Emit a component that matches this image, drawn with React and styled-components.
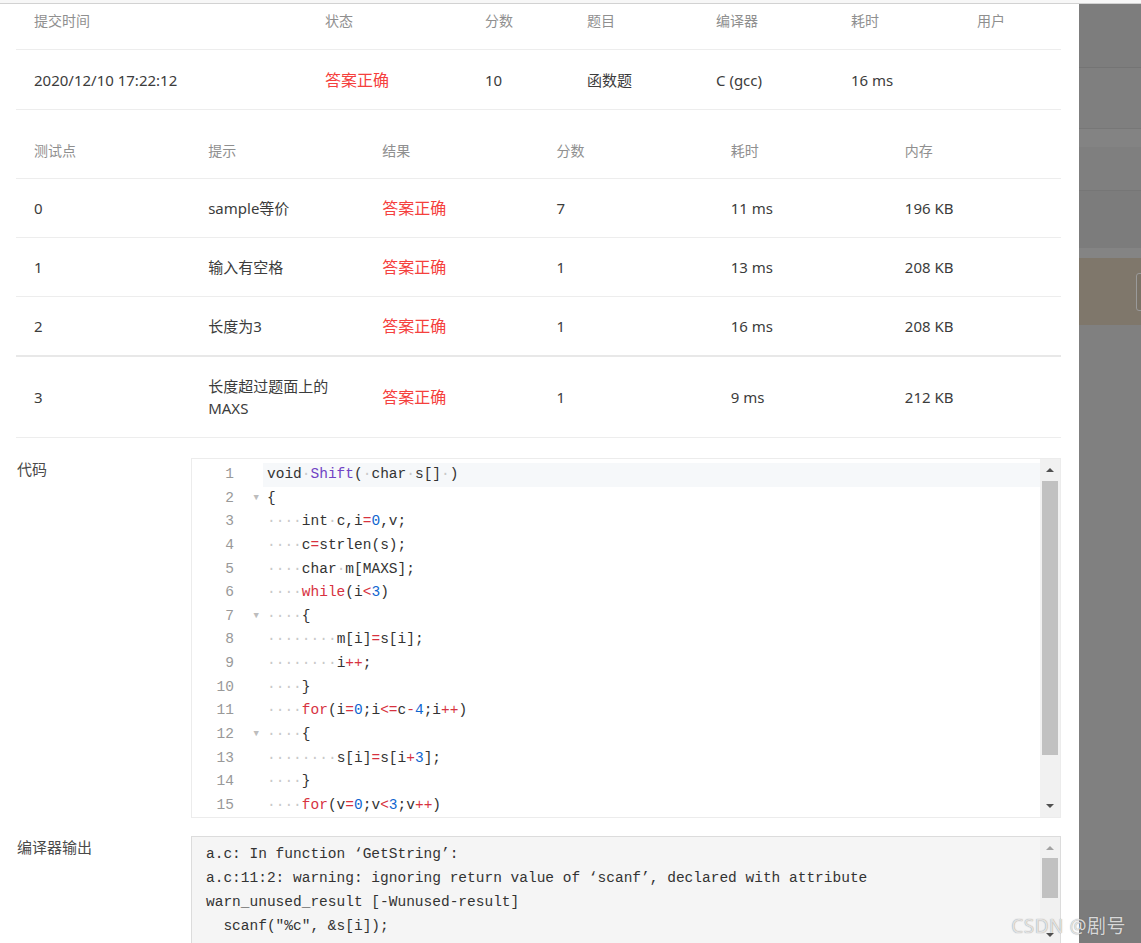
import React from 'react';
import styled, { createGlobalStyle } from 'styled-components';

const GlobalStyle = createGlobalStyle`
  html, body {
    margin: 0;
    padding: 0;
  }
  body {
    width: 1141px;
    height: 943px;
    overflow: hidden;
    background: #fff;
    font-family: "Noto Sans", "Noto Sans CJK SC", sans-serif;
    color: #333;
  }
`;

const mono = `"Liberation Mono", "DejaVu Sans Mono", monospace`;

const Screen = styled.div`
  position: relative;
  width: 1141px;
  height: 943px;
  overflow: hidden;
  display: flex;
  flex-direction: column;
`;

const TopEdge = styled.div`
  height: 3px;
  background: #f7f7f7;
  border-bottom: 1px solid #d2d2d2;
  flex: none;
`;

const Stage = styled.div`
  flex: 1;
  display: flex;
  min-height: 0;
`;

const Drawer = styled.div`
  width: 1079px;
  flex: none;
  background: #fff;
  padding: 0 18px 0 16px;
  box-sizing: border-box;
  overflow: hidden;
`;

const Backdrop = styled.div`
  flex: 1;
  display: flex;
  flex-direction: column;
  background: #808080;
  overflow: hidden;
`;

const Band = styled.div`
  height: ${p => p.$h}px;
  flex: none;
  background: ${p => p.$bg};
  border-bottom: ${p => (p.$line ? `1px solid ${p.$line}` : 'none')};
  display: flex;
  align-items: center;
  padding-left: 57px;
`;

const Handle = styled.div`
  width: 20px;
  height: 36px;
  flex: none;
  border: 1px solid #9a9a9a;
  border-radius: 3px;
  background: #7a7266;
`;

/* ---------- tables ---------- */

const Row = styled.div`
  display: grid;
  grid-template-columns: ${p => p.$cols};
  box-sizing: border-box;
  border-bottom: ${p => (p.$thick ? 2 : 1)}px solid ${p => (p.$thick ? '#e8e8e8' : '#ededed')};
`;

const SummaryHead = styled(Row)`
  height: 46px;
  align-items: start;
  padding-top: 7px;
`;

const SummaryRow = styled(Row)`
  height: 60px;
  align-items: center;
`;

const CaseHead = styled(Row)`
  height: 69px;
  align-items: end;
  padding-bottom: 17px;
`;

const CaseRow = styled(Row)`
  padding: 18px 0;
  align-items: center;
`;

const HeadCell = styled.div`
  padding: 0 18px;
  font-size: 14px;
  line-height: 20px;
  color: #8f8f8f;
`;

const Cell = styled.div`
  padding: 0 18px;
  font-size: ${p => (p.$ok ? 16 : 15)}px;
  line-height: 22px;
  color: ${p => (p.$ok ? '#f5403d' : '#3c3c3c')};
`;

/* ---------- code blocks ---------- */

const Section = styled.div`
  display: grid;
  grid-template-columns: 175px 870px;
  margin-top: ${p => p.$gap}px;
`;

const Label = styled.div`
  padding-left: 1px;
  font-size: 15px;
  line-height: 22px;
  color: #4a4a4a;
`;

const CodeBox = styled.div`
  height: 360px;
  box-sizing: border-box;
  border: 1px solid #ececec;
  display: flex;
  background: #fff;
`;

const Lines = styled.div`
  flex: 1;
  padding-top: 4px;
  overflow: hidden;
`;

const Line = styled.div`
  display: flex;
  height: 23.64px;
  line-height: 23.64px;
  font-family: ${mono};
  font-size: 14.5px;
`;

const LineNo = styled.div`
  width: 42px;
  flex: none;
  text-align: right;
  color: #999;
`;

const Fold = styled.div`
  width: 29px;
  flex: none;
  text-align: right;
  padding-right: 4px;
  box-sizing: border-box;
  font-size: 9px;
  color: #bdbdbd;
`;

const LineText = styled.div`
  flex: 1;
  padding-left: 4px;
  white-space: pre;
  color: #333;
  background: ${p => (p.$active ? '#f6f8fa' : 'transparent')};
`;

const tokenColors = {
  ws: '#c9c9c9',
  kw: '#d7323f',
  op: '#d7323f',
  fn: '#7043c4',
  num: '#0f66d0',
  txt: '#333',
};

const Tok = styled.span`
  color: ${p => tokenColors[p.$t]};
`;

const Scrollbar = styled.div`
  width: 20px;
  flex: none;
  background: #f1f1f1;
  display: flex;
  flex-direction: column;
`;

const ScrollBtn = styled.div`
  height: ${p => p.$h}px;
  flex: none;
  display: flex;
  align-items: center;
  justify-content: center;
  &::before {
    content: '';
    width: 0;
    height: 0;
    border-left: 4px solid transparent;
    border-right: 4px solid transparent;
    ${p => (p.$down ? 'border-top' : 'border-bottom')}: 4px solid ${p => p.$color};
  }
`;

const Track = styled.div`
  flex: 1;
`;

const Thumb = styled.div`
  height: ${p => p.$h}px;
  margin: 0 2px;
  background: #c1c1c1;
`;

const OutputBox = styled.div`
  height: 110px;
  box-sizing: border-box;
  border: 1px solid #dcdcdc;
  background: #f5f5f5;
  display: flex;
`;

const OutputText = styled.pre`
  flex: 1;
  margin: 0;
  padding: 5px 14px;
  font-family: ${mono};
  font-size: 14.5px;
  line-height: 24px;
  color: #333;
  overflow: hidden;
`;

const Watermark = styled.div`
  position: absolute;
  right: 15px;
  bottom: 4px;
  font-family: "Noto Sans", "Noto Sans CJK SC", sans-serif;
  font-size: 19px;
  color: rgba(240, 240, 240, 0.85);
  text-shadow: 0 0 1px rgba(60, 60, 60, 0.6);
  letter-spacing: 0.5px;
`;

/* ---------- data ---------- */

const summaryCols = '291px 160px 102px 129px 135px 126px 1fr';
const summaryHead = ['提交时间', '状态', '分数', '题目', '编译器', '耗时', '用户'];

const caseCols = 'repeat(6, 1fr)';
const caseHead = ['测试点', '提示', '结果', '分数', '耗时', '内存'];
const cases = [
  ['0', 'sample等价', '7', '11 ms', '196 KB'],
  ['1', '输入有空格', '1', '13 ms', '208 KB'],
  ['2', '长度为3', '1', '16 ms', '208 KB'],
  ['3', '长度超过题面上的MAXS', '1', '9 ms', '212 KB'],
];

const code = [
  'void Shift( char s[] )',
  '{',
  '    int c,i=0,v;',
  '    c=strlen(s);',
  '    char m[MAXS];',
  '    while(i<3)',
  '    {',
  '        m[i]=s[i];',
  '        i++;',
  '    }',
  '    for(i=0;i<=c-4;i++)',
  '    {',
  '        s[i]=s[i+3];',
  '    }',
  '    for(v=0;v<3;v++)',
];
const folds = [2, 7, 12];

const output = [
  'a.c: In function ‘GetString’:',
  'a.c:11:2: warning: ignoring return value of ‘scanf’, declared with attribute',
  'warn_unused_result [-Wunused-result]',
  '  scanf("%c", &s[i]);',
];

function tokenize(line) {
  const re = /( +)|\b(while|for)\b|(Shift)|(\d+)|([=<>+-]+)|([^ =<>+\-\d]+)/g;
  const out = [];
  let m;
  while ((m = re.exec(line))) {
    if (m[1]) out.push(['ws', '·'.repeat(m[1].length)]);
    else if (m[2]) out.push(['kw', m[2]]);
    else if (m[3]) out.push(['fn', m[3]]);
    else if (m[4]) out.push(['num', m[4]]);
    else if (m[5]) out.push(['op', m[5]]);
    else out.push(['txt', m[6]]);
  }
  return out;
}

const backdropBands = [
  { h: 63, bg: '#7d7d7d', line: '#747474' },
  { h: 60, bg: '#7f7f7f', line: '#777777' },
  { h: 18, bg: '#838383' },
  { h: 43, bg: '#7f7f7f', line: '#767676' },
  { h: 57, bg: '#7c7c7c' },
  { h: 10, bg: '#848484' },
  { h: 67, bg: '#7f776b', handle: true },
  { h: 565, bg: '#808080' },
  { h: 60, bg: '#7b7b7b' },
];

export default function App() {
  return (
    <Screen>
      <GlobalStyle />
      <TopEdge />
      <Stage>
        <Drawer>
          <SummaryHead $cols={summaryCols}>
            {summaryHead.map(h => (
              <HeadCell key={h}>{h}</HeadCell>
            ))}
          </SummaryHead>
          <SummaryRow $cols={summaryCols}>
            <Cell>2020/12/10 17:22:12</Cell>
            <Cell $ok>答案正确</Cell>
            <Cell>10</Cell>
            <Cell>函数题</Cell>
            <Cell>C (gcc)</Cell>
            <Cell>16 ms</Cell>
            <Cell />
          </SummaryRow>

          <CaseHead $cols={caseCols}>
            {caseHead.map(h => (
              <HeadCell key={h}>{h}</HeadCell>
            ))}
          </CaseHead>
          {cases.map(([id, hint, score, time, mem], i) => (
            <CaseRow key={id} $cols={caseCols} $thick={i === 2}>
              <Cell>{id}</Cell>
              <Cell>{hint}</Cell>
              <Cell $ok>答案正确</Cell>
              <Cell>{score}</Cell>
              <Cell>{time}</Cell>
              <Cell>{mem}</Cell>
            </CaseRow>
          ))}

          <Section $gap={20}>
            <Label>代码</Label>
            <CodeBox>
              <Lines>
                {code.map((line, i) => (
                  <Line key={i}>
                    <LineNo>{i + 1}</LineNo>
                    <Fold>{folds.includes(i + 1) ? '▼' : ''}</Fold>
                    <LineText $active={i === 0}>
                      {tokenize(line).map(([t, s], j) => (
                        <Tok key={j} $t={t}>{s}</Tok>
                      ))}
                    </LineText>
                  </Line>
                ))}
              </Lines>
              <Scrollbar>
                <ScrollBtn $h={22} $color="#505050" />
                <Track>
                  <Thumb $h={274} />
                </Track>
                <ScrollBtn $h={22} $down $color="#505050" />
              </Scrollbar>
            </CodeBox>
          </Section>

          <Section $gap={18}>
            <Label>编译器输出</Label>
            <OutputBox>
              <OutputText>{output.join('\n')}</OutputText>
              <Scrollbar>
                <ScrollBtn $h={21} $color="#a3a3a3" />
                <Track>
                  <Thumb $h={40} />
                </Track>
                <ScrollBtn $h={20} $down $color="#505050" />
              </Scrollbar>
            </OutputBox>
          </Section>
        </Drawer>
        <Backdrop>
          {backdropBands.map((b, i) => (
            <Band key={i} $h={b.h} $bg={b.bg} $line={b.line}>
              {b.handle && <Handle />}
            </Band>
          ))}
        </Backdrop>
      </Stage>
      <Watermark>CSDN @剧号</Watermark>
    </Screen>
  );
}
